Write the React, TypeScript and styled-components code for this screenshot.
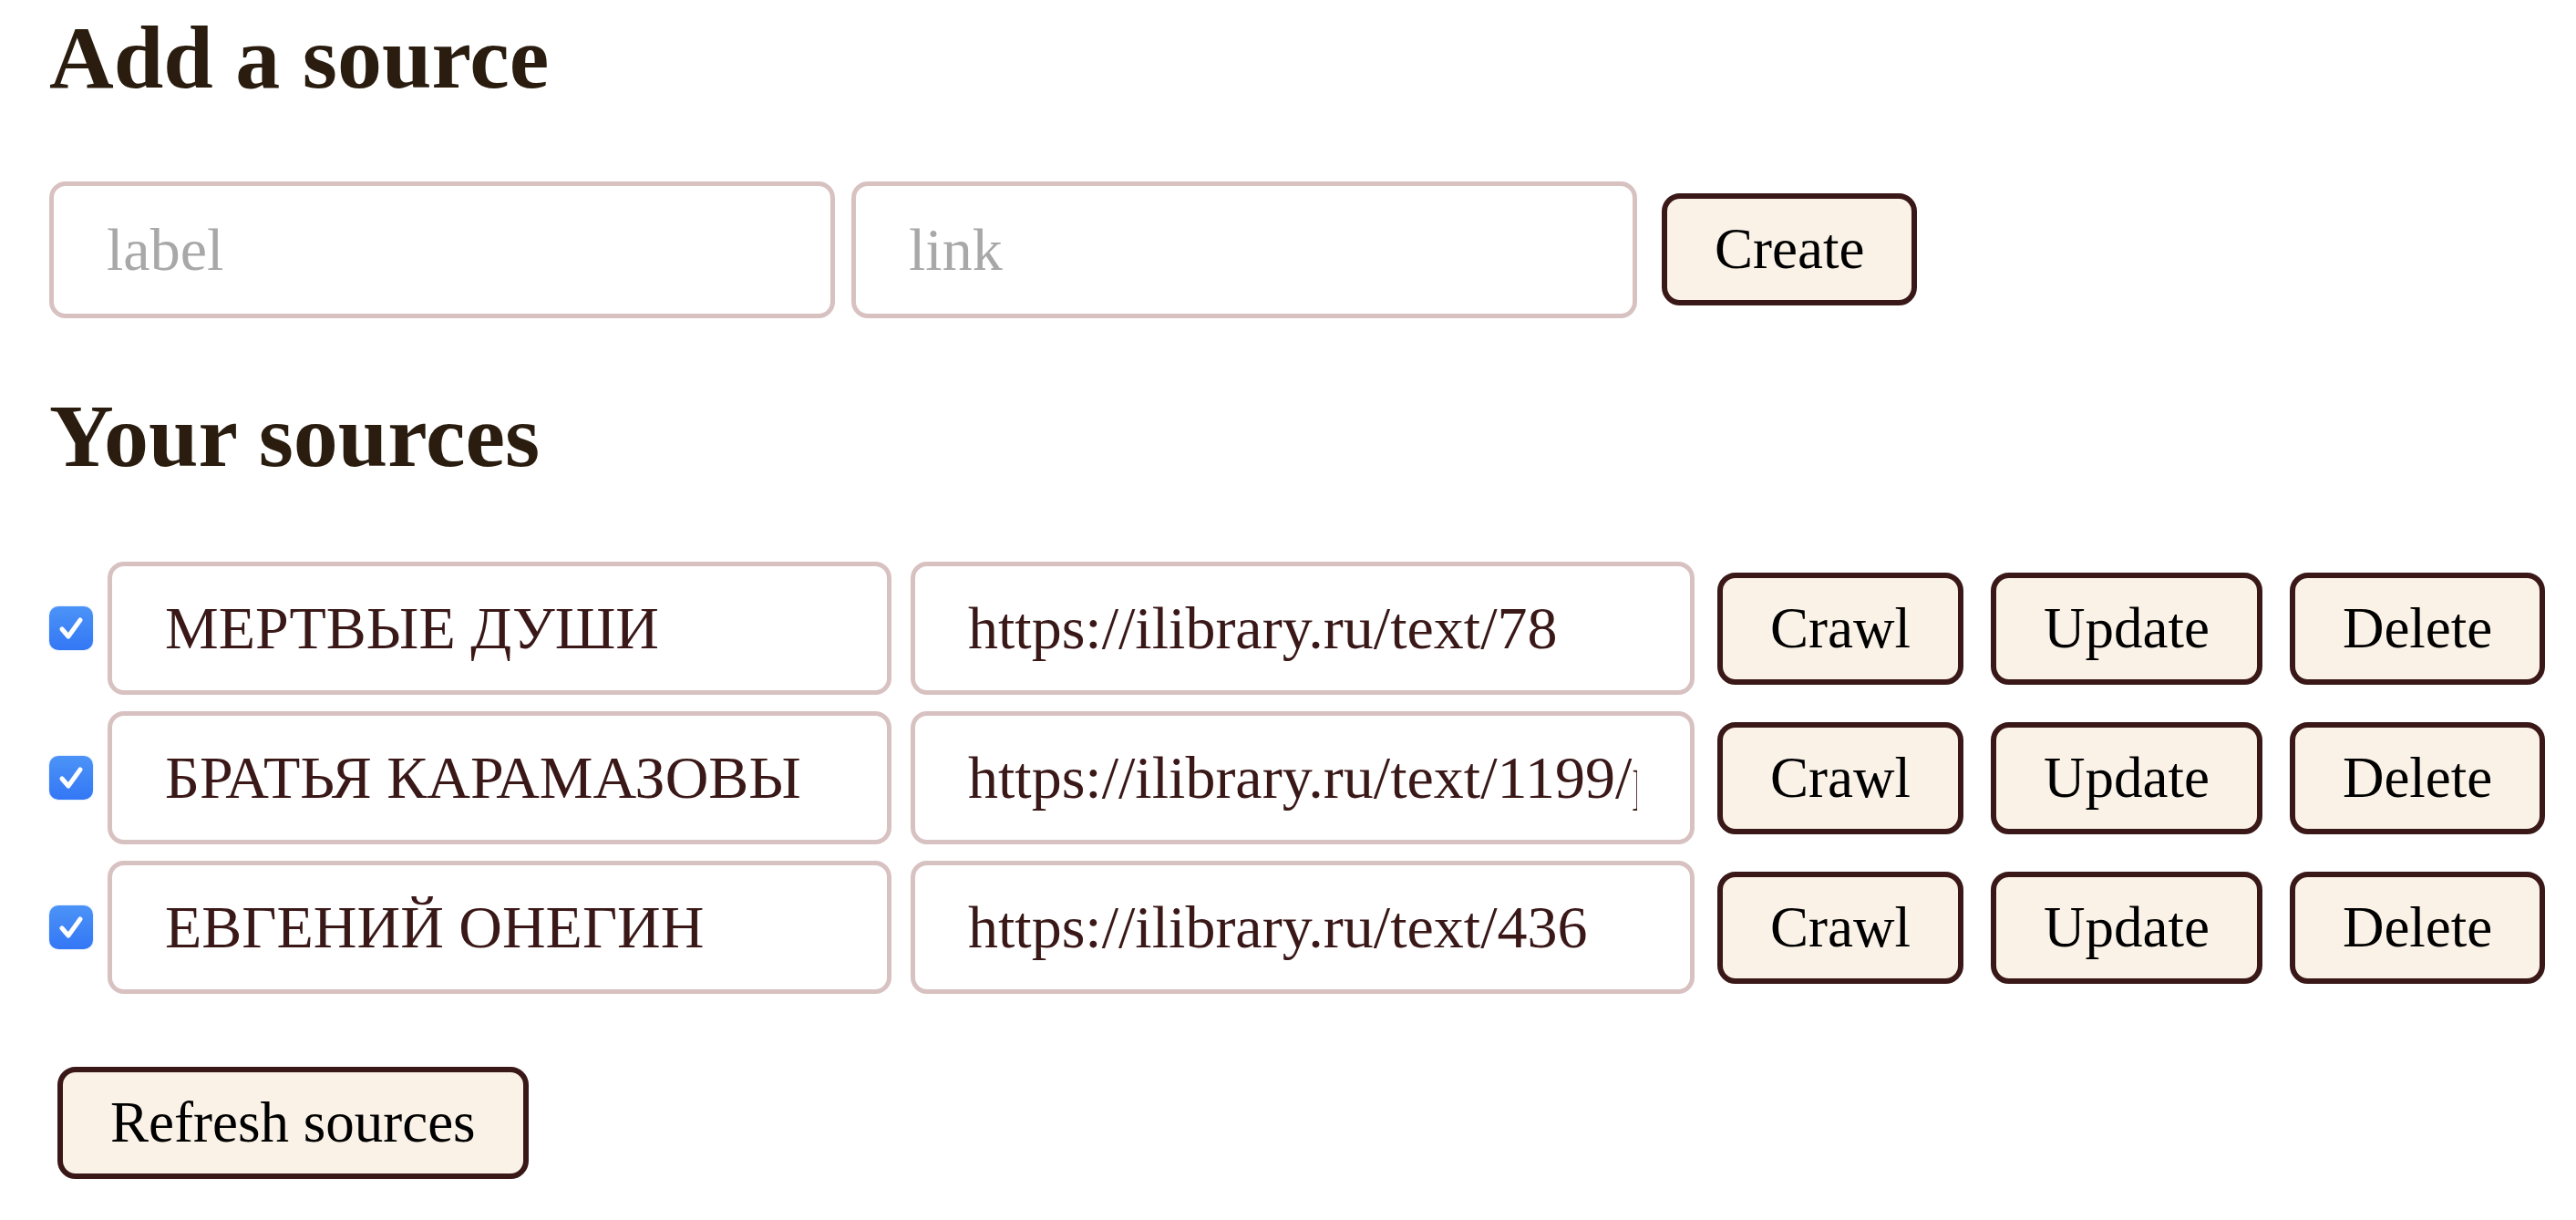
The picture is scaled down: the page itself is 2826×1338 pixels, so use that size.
import React from 'react';
import styled, { createGlobalStyle } from 'styled-components';

interface Source {
  id: number;
  label: string;
  link: string;
  enabled: boolean;
}

const sources: Source[] = [
  { id: 1, label: 'МЕРТВЫЕ ДУШИ', link: 'https://ilibrary.ru/text/78', enabled: true },
  { id: 2, label: 'БРАТЬЯ КАРАМАЗОВЫ', link: 'https://ilibrary.ru/text/1199/p.1/index.html', enabled: true },
  { id: 3, label: 'ЕВГЕНИЙ ОНЕГИН', link: 'https://ilibrary.ru/text/436', enabled: true },
];

const GlobalStyle = createGlobalStyle`
  body {
    margin: 0;
    background: #fff;
    font-family: "Liberation Serif", "Times New Roman", serif;
  }
`;

const Page = styled.div`
  padding: 6px 0 40px 54px;
`;

const Heading = styled.h2`
  margin: 0;
  font-size: 98px;
  line-height: 1.18;
  font-weight: 700;
  color: #2a1d0f;
`;

const CreateForm = styled.div`
  display: flex;
  align-items: center;
  margin: 77px 0 72px;
`;

const TextInput = styled.input`
  box-sizing: border-box;
  width: 862px;
  height: 150px;
  padding: 0 58px;
  border: 5px solid #d8c1c1;
  border-radius: 18px;
  background: #fff;
  font-family: "Liberation Serif", "Times New Roman", serif;
  font-size: 66px;
  color: #3a1818;
  outline: none;

  &::placeholder {
    color: #a8a8a8;
  }

  & + & {
    margin-left: 18px;
  }
`;

const Button = styled.button`
  box-sizing: border-box;
  height: 123px;
  padding: 0 52px;
  border: 6px solid #3a1818;
  border-radius: 20px;
  background: #faf2e7;
  font-family: "Liberation Serif", "Times New Roman", serif;
  font-size: 63px;
  color: #000;
  cursor: pointer;
`;

const CreateButton = styled(Button)`
  margin-left: 27px;
`;

const SourceList = styled.div`
  display: flex;
  flex-direction: column;
  gap: 18px;
  margin-top: 80px;
`;

const Row = styled.div`
  display: flex;
  align-items: center;
`;

const CheckBox = styled.span`
  display: inline-flex;
  align-items: center;
  justify-content: center;
  width: 48px;
  height: 48px;
  margin-right: 16px;
  border-radius: 10px;
  background: linear-gradient(#4b93f7, #3377f5);
  box-shadow: 0 0 2px rgba(51, 119, 245, 0.35);
`;

const RowInput = styled(TextInput)`
  width: 860px;
  height: 146px;

  & + & {
    margin-left: 21px;
  }
`;

const Actions = styled.div`
  display: flex;
  gap: 30px;
  margin-left: 25px;
`;

const RefreshButton = styled(Button)`
  margin: 80px 0 0 9px;
`;

const Check: React.FC = () => (
  <CheckBox role="checkbox" aria-checked="true">
    <svg width="32" height="32" viewBox="0 0 32 32">
      <path d="M6 17 L13 25 L26 7" fill="none" stroke="#fff" strokeWidth="5" strokeLinecap="round" strokeLinejoin="round" />
    </svg>
  </CheckBox>
);

const App: React.FC = () => {
  return (
    <Page>
      <GlobalStyle />
      <Heading>Add a source</Heading>
      <CreateForm>
        <TextInput placeholder="label" />
        <TextInput placeholder="link" />
        <CreateButton>Create</CreateButton>
      </CreateForm>

      <Heading>Your sources</Heading>
      <SourceList>
        {sources.map((source) => (
          <Row key={source.id}>
            {source.enabled && <Check />}
            <RowInput defaultValue={source.label} />
            <RowInput defaultValue={source.link} />
            <Actions>
              <Button>Crawl</Button>
              <Button>Update</Button>
              <Button>Delete</Button>
            </Actions>
          </Row>
        ))}
      </SourceList>

      <RefreshButton>Refresh sources</RefreshButton>
    </Page>
  );
};

export default App;
